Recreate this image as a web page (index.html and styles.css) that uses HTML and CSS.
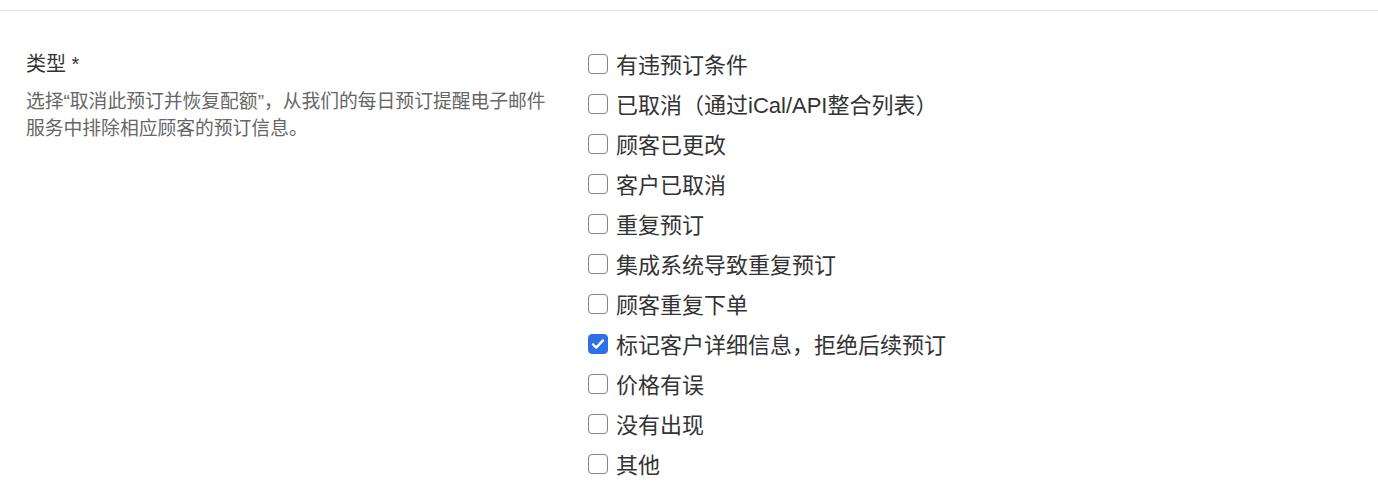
FILE: index.html
```html
<!DOCTYPE html>
<html lang="zh-CN">

<head>
    <meta charset="UTF-8">
    <meta name="viewport" content="width=device-width, initial-scale=1.0">
    <title>类型</title>

    <link rel="stylesheet" href="styles.css">
</head>

<body>
    <div class="topbar"></div>

    <div class="form-row">
        <div class="field-info">
            <div class="field-title">类型 *</div>
            <p class="field-desc">选择“取消此预订并恢复配额”，从我们的每日预订提醒电子邮件服务中排除相应顾客的预订信息。</p>
        </div>

        <div class="options">
            <label class="option"><input type="checkbox"><span>有违预订条件</span></label>
            <label class="option"><input type="checkbox"><span>已取消（通过iCal/API整合列表）</span></label>
            <label class="option"><input type="checkbox"><span>顾客已更改</span></label>
            <label class="option"><input type="checkbox"><span>客户已取消</span></label>
            <label class="option"><input type="checkbox"><span>重复预订</span></label>
            <label class="option"><input type="checkbox"><span>集成系统导致重复预订</span></label>
            <label class="option"><input type="checkbox"><span>顾客重复下单</span></label>
            <label class="option"><input type="checkbox" checked><span>标记客户详细信息，拒绝后续预订</span></label>
            <label class="option"><input type="checkbox"><span>价格有误</span></label>
            <label class="option"><input type="checkbox"><span>没有出现</span></label>
            <label class="option"><input type="checkbox"><span>其他</span></label>
        </div>
    </div>
</body>

</html>
```

FILE: styles.css
```css
body {
    margin: 0;
    background: #fff;
    color: #333;
    font-family: "Liberation Sans", "Noto Sans CJK SC", sans-serif;
}

.topbar {
    height: 10px;
    border-bottom: 1px solid #e6e6e6;
}

.form-row {
    display: flex;
    padding: 33px 26px 0;
}

.field-info {
    width: 562px;
    flex-shrink: 0;
}

.field-title {
    font-size: 20px;
    line-height: 40px;
}

.field-desc {
    width: 535px;
    margin: 4px 0 0;
    font-size: 18.8px;
    line-height: 27px;
    color: #666;
}

.options {
    display: flex;
    flex-direction: column;
}

.option {
    display: flex;
    align-items: center;
    gap: 8px;
    height: 40px;
    font-size: 22px;
    cursor: pointer;
}

.option span {
    position: relative;
    top: -1px;
}

.option input {
    appearance: none;
    -webkit-appearance: none;
    width: 20px;
    height: 20px;
    margin: 0;
    border: 1.5px solid #858585;
    border-radius: 4px;
    background: #fff;
    flex-shrink: 0;
}

.option input:checked {
    border-color: #2e6fe6;
    background: #2e6fe6 url("data:image/svg+xml,%3Csvg xmlns='http://www.w3.org/2000/svg' viewBox='0 0 20 20'%3E%3Cpath d='M4.5 10.5l3.5 3.5 7.5-8' fill='none' stroke='white' stroke-width='2.6' stroke-linecap='round' stroke-linejoin='round'/%3E%3C/svg%3E") center / 100% no-repeat;
}
```
